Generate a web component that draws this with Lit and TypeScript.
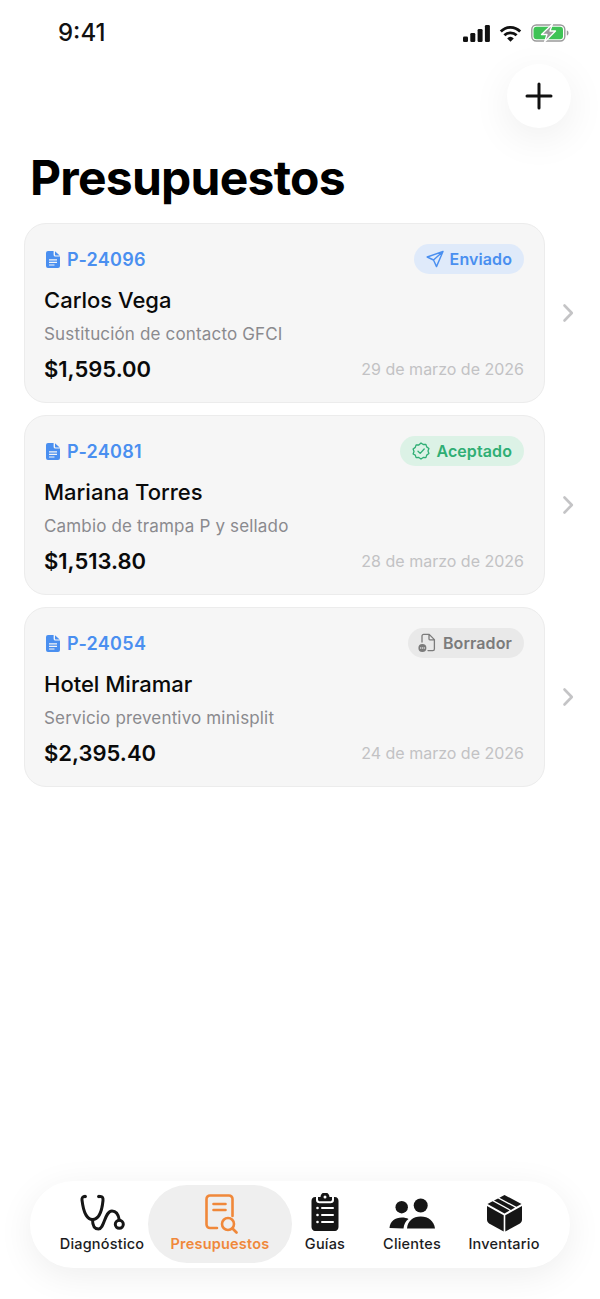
import { LitElement, html, css, svg } from "lit";
import { customElement } from "lit/decorators.js";

const docIcon = html`<svg class="doc" viewBox="0 0 14 17" width="14" height="17"><path fill="#4a8ff0" fill-rule="evenodd" d="M2 0h5.6v3.8c0 1 .8 1.8 1.8 1.8H14V15a2 2 0 0 1-2 2H2a2 2 0 0 1-2-2V2a2 2 0 0 1 2-2zm7 .3L13.7 4.4H9.6a.6.6 0 0 1-.6-.6zM3 8.2v1.2h8V8.2zm0 2.6V12h8v-1.2zm0 2.6v1.2h5.5v-1.2z"/></svg>`;

const sendIcon = html`<svg viewBox="0 0 18 18" width="18" height="18" fill="none" stroke="#4a8ff0" stroke-width="1.4" stroke-linejoin="round" stroke-linecap="round"><path d="M17 1.500 1.200 7l6.300 3 3 6.600zM17 1.500 7.500 10"/></svg>`;

const sealIcon = html`<svg viewBox="0 0 18 18" width="18" height="18" fill="none" stroke="#2fae74" stroke-width="1.300" stroke-linejoin="round" stroke-linecap="round"><path d="M9 1l2.200 1.500 2.700-.1.800 2.500 2.200 1.600-.9 2.500.9 2.500-2.200 1.600-.8 2.500-2.700-.1L9 17l-2.200-1.500-2.700.1-.8-2.500L1.100 12l.9-2.500-.9-2.500 2.200-1.600.8-2.500 2.700.1z"/><path d="M6 9.200l2.200 2.200L12.200 7"/></svg>`;

const draftIcon = html`<svg viewBox="0 0 18 20" width="18" height="20" fill="none" stroke="#7b7b7b" stroke-width="1.300" stroke-linejoin="round" stroke-linecap="round"><path d="M4 9V3a1.600 1.600 0 0 1 1.600-1.600h5.600L16.400 6.600V16a1.600 1.600 0 0 1-1.600 1.600H10M11 1.600V6a.8.8 0 0 0 .8.8h4.500"/><circle cx="4.400" cy="15" r="4" fill="#7b7b7b" stroke="none"/><path d="M2.600 15h.1M4.400 15h.1M6.200 15h.1" stroke="#e9e9e9"/></svg>`;

const chevron = html`<svg class="chev" viewBox="0 0 12 20" width="12" height="20" fill="none" stroke="#c4c4c6" stroke-width="2.600" stroke-linecap="round" stroke-linejoin="round"><path d="M2.500 2.500 9.800 10l-7.300 7.500"/></svg>`;

const stethoscope = svg`<g fill="none" stroke="#161616" stroke-width="3" stroke-linecap="round" stroke-linejoin="round"><path d="M6 2.500H5.500C3.700 2.500 2.700 4 3 6 4 14.500 6.500 25.500 13.500 25.500S23.200 14.500 24 6.500c.2-2.500-.5-4-2.500-4H20"/><path d="M13.500 25.500c0 6 2.300 9.500 6 9.500 6 0 6-18 13.500-18 4.500 0 6.500 4 7.300 9"/><circle cx="40.300" cy="30.300" r="4"/></g><circle cx="6" cy="2.500" r="1.800" fill="#161616"/><circle cx="20" cy="2.500" r="1.800" fill="#161616"/>`;

const quoteIcon = svg`<g fill="none" stroke="#f0883a" stroke-width="2.600" stroke-linecap="round" stroke-linejoin="round"><path d="M12 34H5a3.500 3.500 0 0 1-3.500-3.500V5A3.500 3.500 0 0 1 5 1.500h19A3.500 3.500 0 0 1 27.500 5v17"/><path d="M8.500 10h12M8.500 16h12"/><circle cx="23" cy="30" r="6"/><path d="M27.500 34.500 31.500 38.500"/></g>`;

const clipboard = svg`<path fill="#161616" fill-rule="evenodd" d="M10 4h2.500a4.500 4.500 0 0 1 9 0H24v2.500c0 1-.8 1.800-1.800 1.800H11.800c-1 0-1.800-.8-1.800-1.800zM15.500 4a1.500 1.500 0 1 0 3 0 1.500 1.500 0 0 0-3 0zM7.500 4H8v3c0 2.300 1.500 3.300 3.500 3.300h11c2 0 3.500-1 3.500-3.300V4h.5C29.500 4 30.500 6 30.500 8v26c0 2-1.500 4-3.500 4H7c-2 0-3.500-2-3.500-4V8c0-2 1-4 4-4z"/><g fill="#fff"><circle cx="9.500" cy="15" r="1.300"/><circle cx="9.500" cy="22" r="1.300"/><circle cx="9.500" cy="29" r="1.300"/><rect x="13" y="14" width="13" height="2" rx="1"/><rect x="13" y="21" width="13" height="2" rx="1"/><rect x="13" y="28" width="13" height="2" rx="1"/></g>`;

const people = svg`<g fill="#161616"><circle cx="13.700" cy="12.200" r="6.200"/><circle cx="32.700" cy="10.500" r="7"/><path d="M1.500 33C2 26.500 7 22.500 14 22.500c2.500 0 4.700.5 6.500 1.500-3 2-4.500 5.500-5 9.500z"/><path d="M19 33.500c.5-7.500 6-12 13.700-12s13.300 4.500 14.300 12z"/></g>`;

const box = svg`<g fill="#161616"><path d="M17.500 1 12.400 3.700 29.400 12.850 34.500 10z"/><path d="M11.040 4.420 6.960 6.580 23.960 15.900 28.040 13.600z"/><path d="M5.600 7.300 .5 10 17.500 19.500 22.600 16.600z"/><path d="M0 12 16.700 21.300V37.500L2.500 29.700C1 28.800 0 27.500 0 25.800z"/><path d="M35 12 18.300 21.300V37.500L32.500 29.700C34 28.800 35 27.500 35 25.800z"/></g>`;

const budgets = [
  { id: "P-24096", name: "Carlos Vega", desc: "Sustitución de contacto GFCI", total: "$1,595.00", date: "29 de marzo de 2026", status: "Enviado", cls: "sent", icon: sendIcon },
  { id: "P-24081", name: "Mariana Torres", desc: "Cambio de trampa P y sellado", total: "$1,513.80", date: "28 de marzo de 2026", status: "Aceptado", cls: "ok", icon: sealIcon },
  { id: "P-24054", name: "Hotel Miramar", desc: "Servicio preventivo minisplit", total: "$2,395.40", date: "24 de marzo de 2026", status: "Borrador", cls: "draft", icon: draftIcon },
];

const tabs = [
  { label: "Diagnóstico", w: 46, h: 38, vb: "0 0 46 38", g: stethoscope, cls: "t1" },
  { label: "Presupuestos", w: 33, h: 40, vb: "0 0 33 40", g: quoteIcon, cls: "t2 active" },
  { label: "Guías", w: 34, h: 40, vb: "0 0 34 40", g: clipboard, cls: "t3" },
  { label: "Clientes", w: 48, h: 36, vb: "0 0 48 36", g: people, cls: "t4" },
  { label: "Inventario", w: 35, h: 38, vb: "0 0 35 38", g: box, cls: "t5" },
];

@customElement("app-root")
export class AppRoot extends LitElement {
  static styles = css`
    :host {
      display: block;
      position: relative;
      width: 600px;
      height: 1299px;
      background: #fff;
      overflow: hidden;
      font-family: Inter, "Liberation Sans", sans-serif;
      color: #000;
    }
    .status {
      height: 64px;
      box-sizing: border-box;
      padding: 19px 31px 0 58px;
      display: flex;
      justify-content: space-between;
      align-items: flex-start;
    }
    .time { font-size: 24px; font-weight: 500; line-height: 28px; color: #111; }
    .status-icons { display: flex; align-items: center; gap: 9px; height: 28px; }
    .fab {
      position: absolute;
      left: 507px;
      top: 64px;
      width: 64px;
      height: 64px;
      border-radius: 50%;
      background: #fff;
      box-shadow: 0 10px 40px rgba(0, 0, 0, 0.07);
      display: flex;
      align-items: center;
      justify-content: center;
    }
    h1 {
      margin: 82px 0 0 30px;
      font-size: 48px;
      line-height: 64px;
      font-weight: 700;
      letter-spacing: -0.75px;
    }
    .list {
      margin: 13px 0 0 24px;
      display: flex;
      flex-direction: column;
      gap: 12px;
    }
    .row { display: flex; align-items: center; }
    .chev { margin-left: 17px; }
    .card {
      width: 521px;
      height: 180px;
      box-sizing: border-box;
      background: #f6f6f6;
      border: 1px solid #ececec;
      border-radius: 22px;
      padding: 20px 20px 0 19px;
    }
    .top { display: flex; justify-content: space-between; align-items: center; height: 30px; }
    .ref { display: flex; align-items: center; gap: 7px; color: #4a8ff0; font-size: 18px; font-weight: 600; letter-spacing: 0.3px; }
    .doc { margin-left: 2px; }
    .badge {
      display: flex;
      align-items: center;
      gap: 6px;
      height: 30px;
      box-sizing: border-box;
      padding: 0 12px;
      border-radius: 15px;
      font-size: 16px;
      font-weight: 600;
      letter-spacing: 0.1px;
    }
    .sent { background: #dfeafa; color: #4a8ff0; }
    .ok { background: #dcf2e6; color: #2fae74; }
    .draft { background: #e9e9e9; color: #7b7b7b; padding-left: 10px; gap: 7px; }
    .name { margin-top: 12px; font-size: 22px; line-height: 28px; font-weight: 500; color: #0a0a0a; }
    .desc { margin-top: 8px; font-size: 17px; line-height: 24px; color: #8a8a8e; letter-spacing: 0.16px; }
    .bottom { margin-top: 7px; display: flex; justify-content: space-between; align-items: center; height: 32px; }
    .total { font-size: 22px; font-weight: 600; color: #0a0a0a; }
    .date { font-size: 16px; color: #c2c2c4; }
    .tabbar {
      position: absolute;
      left: 30px;
      top: 1181px;
      width: 540px;
      height: 87px;
      box-sizing: border-box;
      border-radius: 44px;
      background: #fff;
      box-shadow: 0 8px 36px rgba(0, 0, 0, 0.07);
      display: flex;
      align-items: flex-start;
      padding: 4px 4px 0;
    }
    .tab {
      display: flex;
      flex-direction: column;
      align-items: center;
      justify-content: flex-end;
      height: 78px;
      box-sizing: border-box;
      padding-bottom: 10px;
      font-size: 14.500px;
      font-weight: 500;
      line-height: 18px;
      color: #1c1c1e;
      white-space: nowrap;
      letter-spacing: 0.2px;
    }
    .t1 { width: 114px; padding-left: 22px; }
    .t2 { width: 144px; }
    .t3 { width: 66px; }
    .t4 { width: 108px; }
    .t5 { width: 76px; }
    .t1 svg { margin-bottom: 3px; }
    .t2 svg { margin: 0 0 1.500px 2px; }
    .t3 svg { margin-bottom: 2px; }
    .t4 svg { margin-bottom: 4.500px; }
    .t5 svg { margin-bottom: 3px; }
    .active {
      background: #efefef;
      border-radius: 39px;
      color: #f0883a;
      font-weight: 600;
    }
  `;

  render() {
    return html`
      <div class="status">
        <div class="time">9:41</div>
        <div class="status-icons">
          <svg viewBox="0 0 27 17" width="27" height="17" fill="#111"><rect x="0" y="11.500" width="5" height="5.500" rx="1.300"/><rect x="7.300" y="8" width="5" height="9" rx="1.300"/><rect x="14.600" y="4" width="5" height="13" rx="1.300"/><rect x="21.900" y="0" width="5" height="17" rx="1.300"/></svg>
          <svg viewBox="0 0 23 17" width="23" height="17"><g fill="none" stroke="#111" stroke-width="2.800"><path d="M1.800 6.500C7.300 .9 15.700 .9 21.200 6.500"/><path d="M5.400 10.200c3.300-3.200 8.900-3.200 12.200 0"/></g><path d="M11.500 16.800l3.300-3.400a4.800 4.800 0 0 0-6.600 0z" fill="#111"/></svg>
          <svg viewBox="0 0 38 18" width="38" height="18"><rect x=".8" y="1" width="33" height="16" rx="4.500" fill="none" stroke="#9a9a9a" stroke-width="1.400"/><rect x="2.500" y="2.700" width="29.500" height="12.600" rx="3" fill="#3fc356"/><path d="M35.800 6.500c1.200.3 1.700 1.200 1.700 2.500s-.5 2.200-1.700 2.500z" fill="#9a9a9a"/><path d="M21.500 0 10.500 10.500h5.500L13.500 18l11-11h-5.500z" fill="#9a9a9a" stroke="#fff" stroke-width="1.300" stroke-linejoin="round"/></svg>
        </div>
      </div>
      <div class="fab">
        <svg viewBox="0 0 28 28" width="28" height="28" stroke="#111" stroke-width="3" stroke-linecap="round"><path d="M14 2v24M2 14h24"/></svg>
      </div>
      <h1>Presupuestos</h1>
      <div class="list">
        ${budgets.map(
          (b) => html`
            <div class="row">
              <div class="card">
                <div class="top">
                  <div class="ref">${docIcon}<span>${b.id}</span></div>
                  <div class="badge ${b.cls}">${b.icon}<span>${b.status}</span></div>
                </div>
                <div class="name">${b.name}</div>
                <div class="desc">${b.desc}</div>
                <div class="bottom">
                  <div class="total">${b.total}</div>
                  <div class="date">${b.date}</div>
                </div>
              </div>
              ${chevron}
            </div>
          `
        )}
      </div>
      <div class="tabbar">
        ${tabs.map(
          (t) => html`
            <div class="tab ${t.cls}">
              <svg viewBox=${t.vb} width=${t.w} height=${t.h}>${t.g}</svg>
              <span>${t.label}</span>
            </div>
          `
        )}
      </div>
    `;
  }
}
